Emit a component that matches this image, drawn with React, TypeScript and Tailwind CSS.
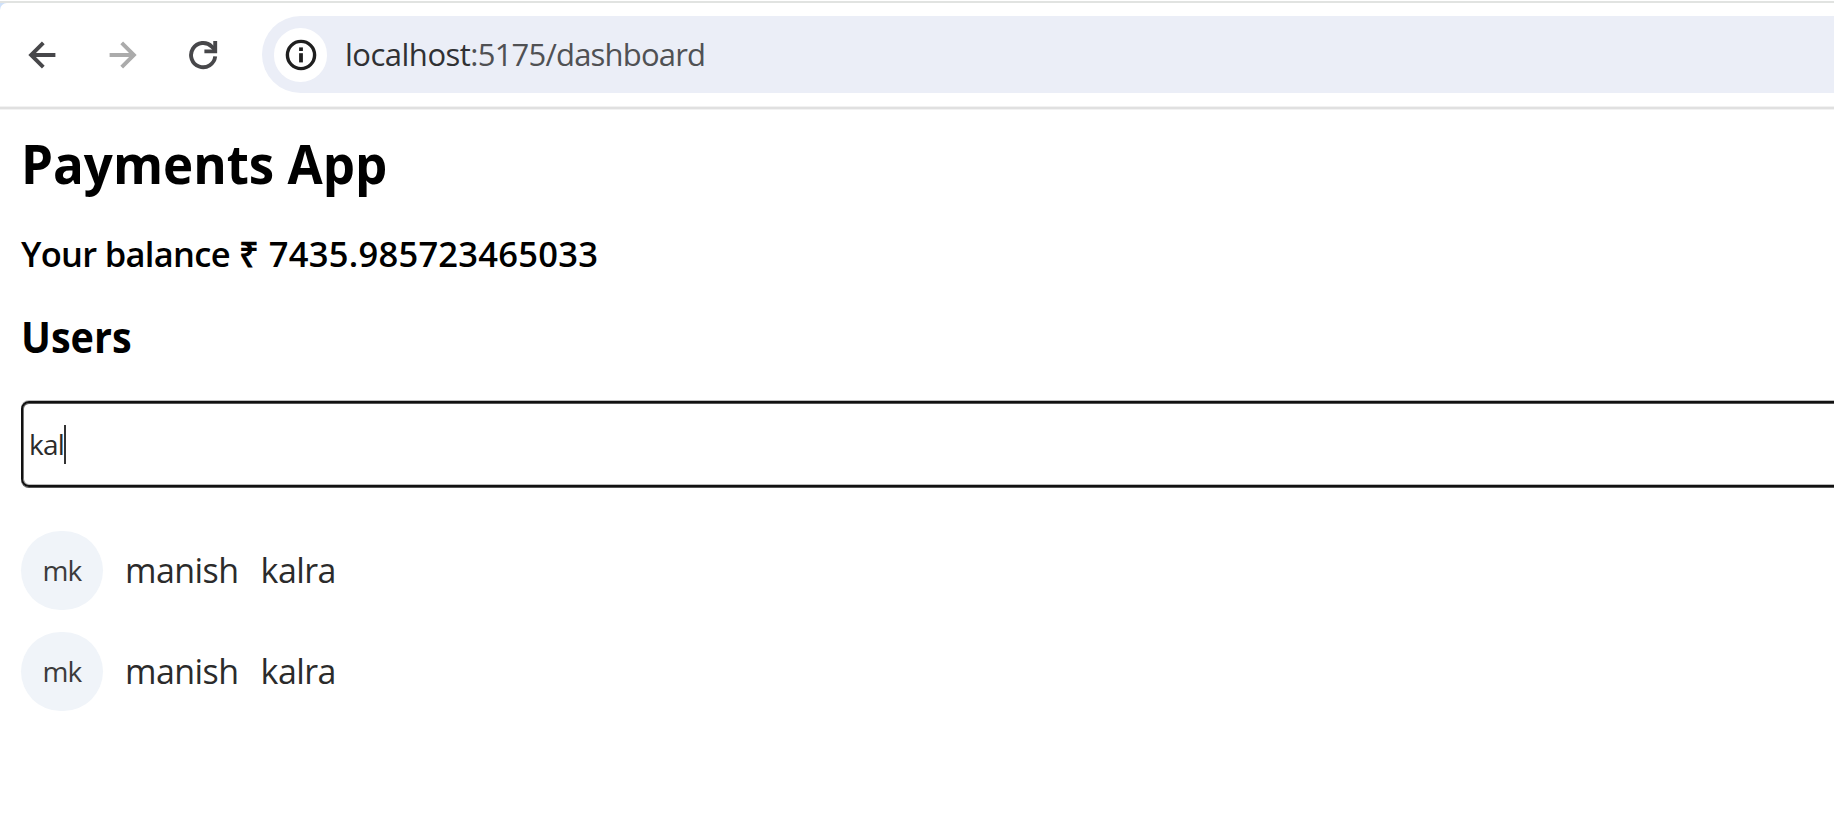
import React from "react";

const users = [
  { id: 1, firstName: "manish", lastName: "kalra" },
  { id: 2, firstName: "manish", lastName: "kalra" },
];

function BackArrow({ className }: { className: string }) {
  return (
    <svg viewBox="0 0 28 28" className={className} fill="none" stroke="currentColor" strokeWidth="3.9">
      <path d="M27.4 14H3M15.3 1.8 3.1 14l12.2 12.2" />
    </svg>
  );
}

function Reload() {
  return (
    <svg viewBox="0 0 30 30" className="h-[30px] w-[30px] shrink-0 text-[#47474a]" fill="none" stroke="currentColor" strokeWidth="3.9">
      <path d="M27.2 16.4A12.1 12.1 0 1 1 23.8 6.6L27 10" />
      <path d="M27.2 1V11.4H16.4" />
    </svg>
  );
}

function Toolbar() {
  return (
    <div className="bg-[#cfe1fa]">
      <header className="flex h-[104px] items-center rounded-tl-[7px] bg-white pb-px">
        <BackArrow className="ml-[28px] h-[28px] w-[28px] shrink-0 text-[#47474a]" />
        <BackArrow className="ml-[53px] h-[28px] w-[28px] shrink-0 rotate-180 text-[#ababab]" />
        <div className="ml-[51px] flex shrink-0">
          <Reload />
        </div>
        <div className="ml-[44px] flex h-[77px] flex-1 items-center rounded-l-full bg-[#ebeef7] pl-[12px]">
          <span className="flex h-[54px] w-[53px] items-center justify-center rounded-full bg-white">
            <svg viewBox="0 0 32 32" className="h-[32px] w-[32px] text-[#1f1f1f]" fill="none" stroke="currentColor">
              <circle cx="16" cy="16" r="13.6" strokeWidth="3.4" />
              <path d="M16 14.2V23.4" strokeWidth="3.8" />
              <path d="M16 8.4V12" strokeWidth="3.8" />
            </svg>
          </span>
          <span className="ml-[18px] whitespace-nowrap text-[31px] leading-[77px] tracking-[-0.8px] text-[#505154]">
            <span className="tracking-[-0.5px] text-[#303134]">localhost</span>:5175/dashboard
          </span>
        </div>
      </header>
    </div>
  );
}

function UserRow({ firstName, lastName }: { firstName: string; lastName: string }) {
  return (
    <li className="flex h-[79px] items-center">
      <span className="flex h-[79px] w-[82px] shrink-0 items-center justify-center rounded-full bg-[#f0f4f9] text-[28px] tracking-[-0.8px] text-[#3c3c3c]">
        {firstName[0] + lastName[0]}
      </span>
      <span className="ml-[22px] flex gap-[22px] text-[34px] tracking-[-0.55px] text-[#2b2b2b]">
        <span>{firstName}</span>
        <span>{lastName}</span>
      </span>
    </li>
  );
}

export default function App() {
  return (
    <div className="h-[826px] w-full overflow-hidden bg-white font-['Open_Sans',sans-serif] text-black">
      <div className="mt-px h-[2px] bg-[#e1e3e1]" />
      <Toolbar />
      <div className="h-[2px] bg-[#e0e0e0] shadow-[0_0_0_1px_#f2f2f2]" />
      <main className="pl-[21px]">
        <h1 className="mt-[14px] w-fit origin-left scale-x-[0.945] text-[54px] font-bold leading-[80px]">Payments App</h1>
        <p className="mt-[26px] text-[34.5px] font-semibold leading-[50px]">
          <span className="tracking-[-0.7px]">Your balance</span> ₹ <span className="ml-[1px] tracking-[0.25px]">7435.985723465033</span>
        </p>
        <h2 className="mt-[28px] w-fit origin-left scale-x-[0.91] text-[43.5px] font-bold leading-[60px]">Users</h2>
        <div className="mr-[-12px] mt-[34px] flex h-[86px] items-center rounded-[8px] border-2 border-[#111111] pl-[6px] shadow-[0_-1px_0_#bbb,0_1px_0_#555,inset_0_1px_0_#555,inset_0_-1px_0_#bbb,inset_1px_0_0_#777]">
          <span className="text-[28px] tracking-[-0.8px] text-[#2b2b2b]">kal</span>
          <span className="h-[39px] w-[2px] bg-[#333]" />
        </div>
        <ul className="mt-[43.5px] flex flex-col gap-[22px]">
          {users.map((u) => (
            <UserRow key={u.id} firstName={u.firstName} lastName={u.lastName} />
          ))}
        </ul>
      </main>
    </div>
  );
}
